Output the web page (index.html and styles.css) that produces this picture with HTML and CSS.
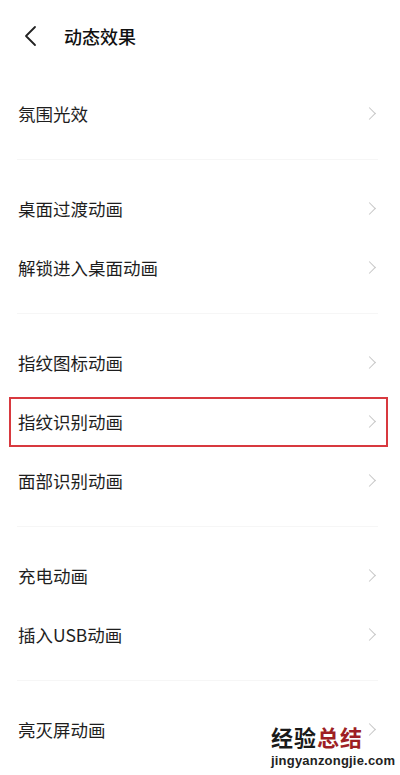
FILE: index.html
```html
<!DOCTYPE html>
<html lang="zh-CN">
<head>
    <meta charset="UTF-8">
    <meta name="viewport" content="width=device-width, initial-scale=1.0">
    <title>动态效果</title>
    <link rel="stylesheet" href="styles.css">
</head>
<body>
    <div class="page">
        <div class="header">
            <svg class="back" width="14" height="22" viewBox="0 0 14 22">
                <polyline points="11,2 2,11 11,20" fill="none" stroke="#222" stroke-width="1.8" stroke-linecap="round" stroke-linejoin="round"/>
            </svg>
            <span class="title">动态效果</span>
        </div>

        <div class="list">
            <div class="group">
                <div class="row"><span>氛围光效</span><i class="chev"></i></div>
            </div>
            <div class="divider"></div>
            <div class="group">
                <div class="row"><span>桌面过渡动画</span><i class="chev"></i></div>
                <div class="row"><span>解锁进入桌面动画</span><i class="chev"></i></div>
            </div>
            <div class="divider"></div>
            <div class="group">
                <div class="row"><span>指纹图标动画</span><i class="chev"></i></div>
                <div class="row marked"><span>指纹识别动画</span><i class="chev"></i></div>
                <div class="row"><span>面部识别动画</span><i class="chev"></i></div>
            </div>
            <div class="divider"></div>
            <div class="group">
                <div class="row"><span>充电动画</span><i class="chev"></i></div>
                <div class="row"><span>插入USB动画</span><i class="chev"></i></div>
            </div>
            <div class="divider"></div>
            <div class="group">
                <div class="row"><span>亮灭屏动画</span><i class="chev"></i></div>
            </div>
        </div>

        <div class="watermark">
            <div class="wm-big"><span>经验</span><span class="wm-red">总结</span></div>
            <div class="wm-small">jingyanzongjie.com</div>
        </div>
    </div>
</body>
</html>
```

FILE: styles.css
```css
body {
    margin: 0;
    background: #fff;
    font-family: "Noto Sans CJK SC", "Noto Sans", sans-serif;
    color: #222;
}
.page {
    position: relative;
    width: 400px;
    height: 775px;
    overflow: hidden;
    background: #fff;
}
.header {
    height: 72px;
    display: flex;
    align-items: center;
    padding-left: 24px;
}
.back {
    display: block;
}
.title {
    margin-left: 26px;
    font-size: 18px;
    font-weight: 500;
    color: #111;
}
.list {
    padding-top: 12px;
}
.row {
    position: relative;
    height: 59px;
    display: flex;
    align-items: center;
    justify-content: space-between;
    padding: 0 24px 0 18px;
    font-size: 17.5px;
    color: #1e1e1e;
}
.chev {
    width: 8px;
    height: 8px;
    border-top: 1.6px solid #c6c6c6;
    border-right: 1.6px solid #c6c6c6;
    transform: rotate(45deg);
    margin-right: 2px;
}
.divider {
    height: 1px;
    background: #f6f6f6;
    margin: 16px 22px 19px 17px;
}
.marked::after {
    content: "";
    position: absolute;
    left: 9px;
    right: 12px;
    top: 5px;
    height: 50px;
    border: 2.5px solid #d8393f;
    box-sizing: border-box;
}
.watermark {
    position: absolute;
    left: 271px;
    top: 725px;
    line-height: 1;
}
.wm-big {
    font-size: 22px;
    font-weight: 700;
    color: #1a1a1a;
    letter-spacing: 1px;
}
.wm-red {
    color: #9e1f24;
}
.wm-small {
    margin-top: 7px;
    font-family: "Liberation Sans", sans-serif;
    font-size: 13px;
    font-weight: 700;
    color: #222;
    letter-spacing: 0.2px;
}
```
